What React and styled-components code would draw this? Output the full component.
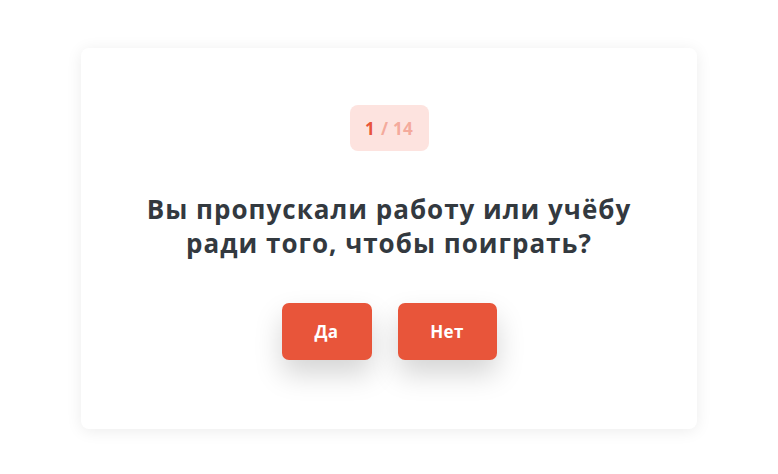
import React from "react";
import styled, { createGlobalStyle } from "styled-components";

const GlobalStyle = createGlobalStyle`
  html, body {
    margin: 0;
    padding: 0;
    background: #ffffff;
    font-family: "Open Sans", "DejaVu Sans", sans-serif;
  }
`;

const Page = styled.div`
  width: 778px;
  height: 474px;
  padding-top: 48px;
  box-sizing: border-box;
  display: flex;
  justify-content: center;
  align-items: flex-start;
`;

const Card = styled.div`
  width: 616px;
  height: 381px;
  box-sizing: border-box;
  background: #ffffff;
  border-radius: 8px;
  box-shadow: 0 2px 16px rgba(0, 0, 0, 0.08);
  display: flex;
  flex-direction: column;
  align-items: center;
  padding-top: 57px;
`;

const Counter = styled.div`
  width: 79px;
  height: 46px;
  border-radius: 8px;
  background: #fde3df;
  display: flex;
  justify-content: center;
  align-items: center;
  font-size: 17px;
  font-weight: 700;
  letter-spacing: 0.3px;
  color: #f4aa9c;
`;

const Current = styled.span`
  color: #e8553a;
  margin-right: 6px;
`;

const Question = styled.h1`
  margin: 41px 0 0;
  font-size: 26px;
  line-height: 34px;
  font-weight: 700;
  color: #33393f;
  text-align: center;
  letter-spacing: 1px;
`;

const Buttons = styled.div`
  display: flex;
  gap: 26px;
  margin-top: 43px;
`;

const Answer = styled.button`
  width: ${(p) => p.w}px;
  height: 57px;
  border: none;
  border-radius: 7px;
  background: #e8553a;
  color: #ffffff;
  font-family: inherit;
  font-size: 17px;
  font-weight: 700;
  letter-spacing: 0.3px;
  box-shadow: 0 14px 28px rgba(0, 0, 0, 0.17);
  cursor: pointer;
`;

export default function App() {
  return (
    <>
      <GlobalStyle />
      <Page>
        <Card>
          <Counter>
            <Current>1</Current>/ 14
          </Counter>
          <Question>
            Вы пропускали работу или учёбу
            <br />
            ради того, чтобы поиграть?
          </Question>
          <Buttons>
            <Answer w={90}>Да</Answer>
            <Answer w={99}>Нет</Answer>
          </Buttons>
        </Card>
      </Page>
    </>
  );
}
